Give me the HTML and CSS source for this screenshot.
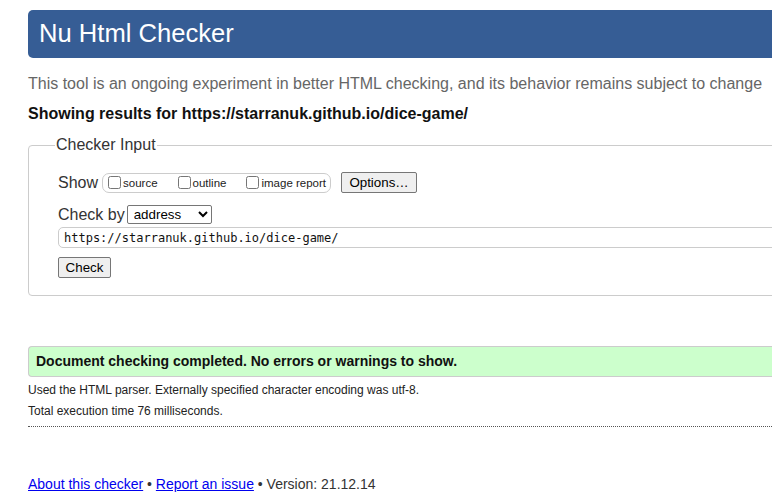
FILE: index.html
```html
<!DOCTYPE html>
<html>
<head>
<meta charset="utf-8">
<title>Nu Html Checker</title>
<link rel="stylesheet" href="styles.css">
</head>
<body>
<div class="page">
  <h1 class="banner">Nu Html Checker</h1>
  <p class="tagline">This tool is an ongoing experiment in better HTML checking, and its behavior remains subject to change</p>
  <p class="showing">Showing results for https://starranuk.github.io/dice-game/</p>
  <fieldset class="input-box">
    <legend class="legend">Checker Input</legend>
    <div class="row show-row">
      <span class="label">Show</span>
      <span class="opts">
        <label class="opt"><input type="checkbox" class="cb"><span>source</span></label>
        <label class="opt"><input type="checkbox" class="cb"><span>outline</span></label>
        <label class="opt"><input type="checkbox" class="cb"><span>image report</span></label>
      </span>
      <button class="btn options-btn">Options…</button>
    </div>
    <div class="row by-row">
      <span class="label">Check by</span>
      <select class="sel"><option>address</option></select>
    </div>
    <div class="url">https://starranuk.github.io/dice-game/</div>
    <button class="btn check-btn">Check</button>
  </fieldset>

  <div class="success">Document checking completed. No errors or warnings to show.</div>
  <p class="details">Used the HTML parser. Externally specified character encoding was utf-8.</p>
  <p class="details">Total execution time 76 milliseconds.</p>
  <hr class="dotted">

  <p class="footer"><a href="#" class="link">About this checker</a> • <a href="#" class="link">Report an issue</a> • Version: 21.12.14</p>
</div>
</body>
</html>
```

FILE: styles.css
```css
html, body {
  margin: 0;
  padding: 0;
  background: #fff;
  overflow: hidden;
}
body {
  font-family: "Liberation Sans", Arial, sans-serif;
  color: #222;
}
.page {
  width: 1000px;
  padding: 10px 0 0 28px;
}
.banner {
  margin: 0;
  height: 48px;
  box-sizing: border-box;
  background: #365d95;
  color: #fff;
  font-weight: normal;
  font-size: 25.6px;
  line-height: 46px;
  padding-left: 11px;
  border-radius: 5px;
}
.tagline {
  margin: 17px 0 0;
  font-size: 16px;
  line-height: 18px;
  color: #666;
}
.showing {
  margin: 12px 0 0;
  font-size: 16px;
  line-height: 18px;
  font-weight: bold;
  color: #111;
}
.input-box {
  margin: 13px 0 0;
  border: 1px solid #ccc;
  border-radius: 4px;
  padding: 11px 0 17px 29px;
  min-width: 0;
}
.legend {
  font-size: 16px;
  color: #333;
  padding: 0 1px;
  margin-left: -3px;
}
.row {
  display: flex;
  align-items: center;
}
.show-row {
  margin-top: 7px;
}
.label {
  font-size: 16px;
  color: #333;
}
.opts {
  display: inline-flex;
  align-items: center;
  margin-left: 4px;
  height: 18px;
  border: 1px solid #ccc;
  border-radius: 7px;
  padding: 0 4px 0 3px;
}
.opt {
  display: inline-flex;
  align-items: center;
  font-size: 11.5px;
  color: #222;
  margin-right: 18px;
}
.opt:last-child {
  margin-right: 0;
}
.cb {
  margin: 0 2px 0 2px;
  width: 13px;
  height: 13px;
}
.btn {
  font-family: "Liberation Sans", Arial, sans-serif;
  font-size: 13.33px;
  color: #000;
  background: #efefef;
  border: 1px solid #767676;
  border-radius: 2px;
  padding: 1px 6px;
}
.options-btn {
  margin-left: 10px;
  height: 21px;
  width: 76px;
}
.by-row {
  margin-top: 12px;
}
.sel {
  margin-left: 2px;
  font-family: "Liberation Sans", Arial, sans-serif;
  font-size: 13.33px;
  width: 85px;
  height: 19px;
  border: 1px solid #767676;
  border-radius: 2px;
  background: #fff;
  color: #000;
  padding: 0 2px;
}
.url {
  margin-top: 3px;
  height: 21px;
  box-sizing: border-box;
  border: 1px solid #ccc;
  border-radius: 5px;
  font-family: "DejaVu Sans Mono", "Liberation Mono", monospace;
  font-size: 12px;
  line-height: 20px;
  padding-left: 5px;
  color: #111;
}
.check-btn {
  margin-top: 9px;
  height: 21px;
  width: 53px;
  display: block;
}
.success {
  margin-top: 50px;
  height: 31px;
  box-sizing: border-box;
  background: #ccffcc;
  border: 1px solid #ccc;
  border-right: none;
  border-radius: 4px 0 0 4px;
  font-weight: bold;
  font-size: 14px;
  line-height: 29px;
  padding-left: 7px;
  color: #111;
}
.details {
  margin: 6px 0 0;
  font-size: 12px;
  line-height: 14px;
  color: #222;
}
.details + .details {
  margin-top: 7px;
}
.dotted {
  margin: 8px 0 0;
  border: none;
  border-top: 1px dotted #555;
  height: 0;
}
.footer {
  margin: 49px 0 0;
  font-size: 14px;
  line-height: 16px;
  color: #333;
}
.link {
  color: #0000ee;
}
```
